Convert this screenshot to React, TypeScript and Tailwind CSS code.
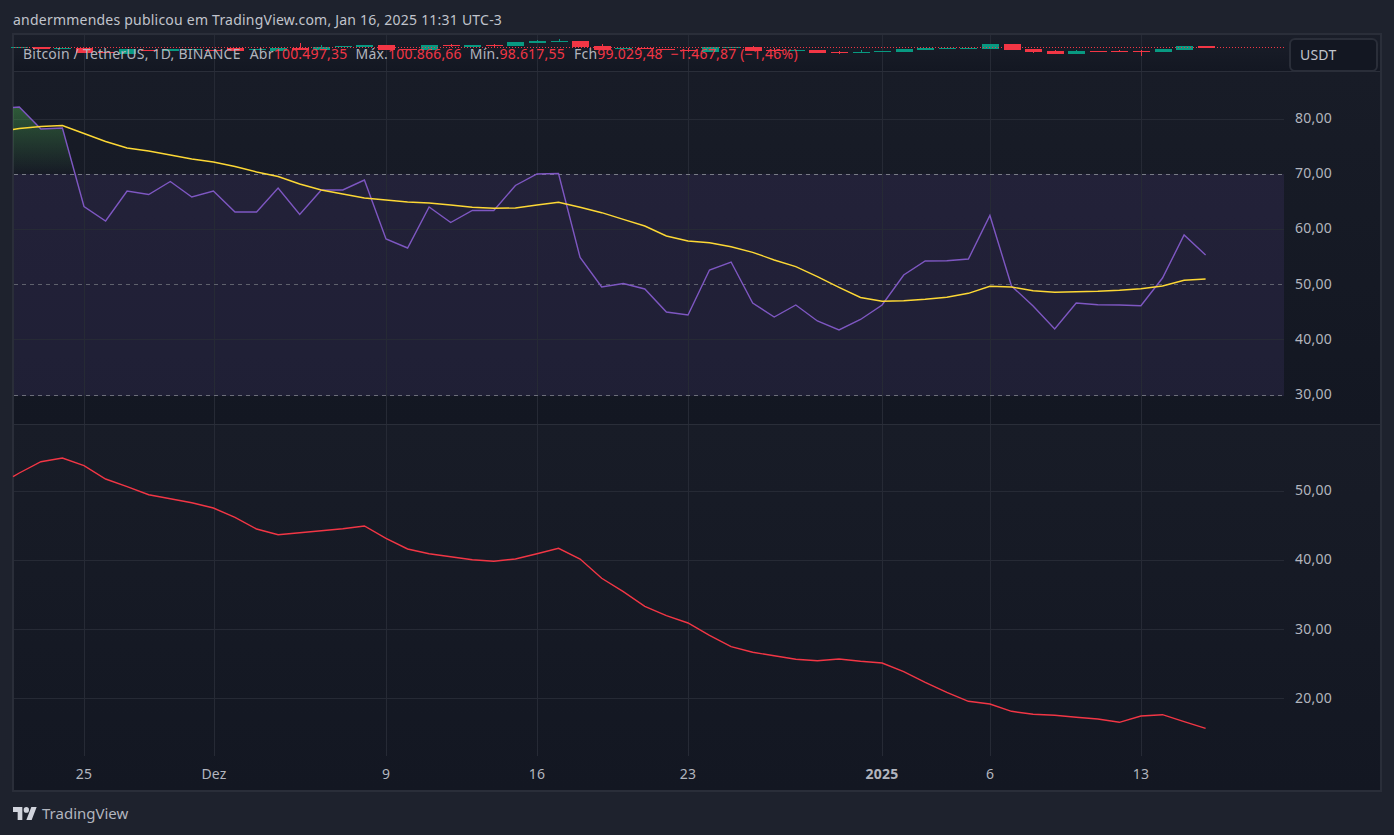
const X = (i: number) => 84 + 21.57 * i;

const rsi = [107, 129, 128, 206.5, 221, 191, 194.5, 181.5, 197, 191, 212, 212, 188, 214.5, 190, 190, 180, 239, 248, 207, 222.5, 210.5, 210.5, 185.5, 174, 173.5, 257.5, 287, 283.5, 289, 312, 315, 270, 262, 303, 317, 305, 321, 330, 319.5, 305, 275, 261, 260.7, 259, 215.5, 286, 306, 329, 303, 304.7, 305, 305.7, 278, 235, 255];
const ma = [128.5, 126.5, 125.5, 133.5, 141.5, 148, 151, 155, 159, 162, 166.5, 172, 176.5, 184, 190, 194, 198, 200, 202, 203, 205, 207.3, 208.3, 208, 205, 202.3, 207.3, 212.7, 219.3, 226, 236, 241, 242.7, 246.7, 252.3, 260, 266.7, 276.7, 287.3, 297.5, 301.3, 300.7, 299.3, 297.3, 293.3, 286.3, 287, 290.7, 292.3, 291.7, 291.3, 290.3, 288.7, 286, 280.3, 279];
const low = [473, 461.7, 458, 465.7, 479, 486.7, 494.7, 498.7, 502.7, 508, 517.3, 529, 534.7, 532.7, 530.7, 528.7, 526, 538.3, 549, 553.7, 556.7, 559.7, 561.3, 559, 553.7, 548.3, 559, 578.3, 591.7, 606.3, 615.7, 623, 635.3, 646.7, 652.3, 655.7, 659.3, 660.7, 659, 661.3, 663, 671.7, 682.3, 692.3, 701.3, 704, 711.3, 714.3, 715.3, 717.3, 719, 722.3, 716, 714.7, 721.7, 728.3];

const pts = (ys: number[], startY: number) =>
  `13,${startY} ` + ys.map((y, k) => `${X(k - 3).toFixed(1)},${y}`).join(" ");

const G = "#089981";
const R = "#f23645";
// i, top, bottom, colour, wick top, wick bottom
const candles: [number, number, number, string, number?, number?][] = [
  [-3, 47, 48, G], [-2, 47, 49, R], [-1, 48, 49, G], [0, 48, 53, R], [1, 52, 53, R], [2, 49, 54, G],
  [3, 50, 51, R], [4, 49, 51, G], [5, 49, 50, G], [6, 50, 51, R], [7, 48, 51, R], [8, 49, 50, G],
  [9, 48, 51, G], [10, 48, 50, R, 43, 50], [11, 47, 50, G, 45, 50], [12, 46, 47, G], [13, 45, 47, G],
  [14, 45, 50, R], [15, 49, 50, R], [16, 45, 50, G], [17, 45, 46, R, 44, 47], [18, 45, 47, G],
  [19, 45, 46, R, 44, 47], [20, 42, 46, G], [21, 41, 43, G, 40, 43], [22, 41, 42, G, 39, 42],
  [23, 41, 47, R], [24, 46, 50, R, 44, 50], [25, 48, 49, G], [26, 48, 49, R], [27, 49, 50, R],
  [28, 50, 51, R, 48, 52], [29, 47, 52, G], [30, 47, 48, G], [31, 47, 51, R, 46, 51],
  [32, 50, 51, R, 48, 52], [33, 50, 51, G], [34, 50, 53, R], [35, 52, 53, R, 51, 54],
  [36, 52, 53, G, 50, 53], [37, 51, 52, G], [38, 49, 52, G], [39, 48, 50, G], [40, 48, 49, G],
  [41, 48, 49, G], [42, 44, 49, G], [43, 44, 50, R], [44, 49, 52, R, 49, 53], [45, 51, 54, R, 50, 54],
  [46, 51, 54, G, 50, 54], [47, 51, 52, R], [48, 51, 52, R, 50, 52], [49, 51, 52, R, 50, 56],
  [50, 49, 52, G], [51, 46, 50, G], [52, 46, 48, R],
];

const vLines = [84.5, 214.5, 386.5, 537.5, 688.5, 882.5, 990.5, 1141.5];
const ticks = [
  { x: 84, t: "25" }, { x: 214, t: "Dez" }, { x: 386, t: "9" }, { x: 537, t: "16" },
  { x: 688, t: "23" }, { x: 882, t: "2025", b: true }, { x: 990, t: "6" }, { x: 1141, t: "13" },
];

const GRID = "#262a35";

function Verticals({ y1, y2 }: { y1: number; y2: number }) {
  return (
    <>
      {vLines.map((x) => (
        <line key={x} x1={x} x2={x} y1={y1} y2={y2} stroke={GRID} />
      ))}
    </>
  );
}

function Price({ v, h }: { v: string; h: string }) {
  return <div className={`flex items-center ${h}`}>{v}</div>;
}

export default function App() {
  return (
    <div
      className="flex h-[835px] w-full flex-col overflow-hidden bg-[#1e222d] text-[14px] tracking-[0.22px] text-[#b2b5be]"
      style={{ fontFamily: '"Noto Sans", sans-serif' }}
    >
      <header className="flex h-[33px] shrink-0 items-center pl-[13px] pt-[5px] text-[#c1c4cc]">
        andermmendes publicou em TradingView.com, Jan 16, 2025 11:31 UTC-3
      </header>

      <main className="mx-3 flex h-[759px] shrink-0 flex-col border-2 border-[#2a2e39]">
        {/* candle pane */}
        <section className="flex h-[37px] shrink-0 border-b border-[#2a2e39] bg-linear-to-b from-[#1a1e29] to-[#131722]">
          <div className="relative w-[1270px] shrink-0">
            <svg width={1270} height={36} viewBox="14 35 1270 36" className="block overflow-visible">
              <Verticals y1={35} y2={71} />
              {candles.map(([i, t, b, c, wt, wb]) => (
                <g key={i} fill={c} shapeRendering="crispEdges">
                  {wt !== undefined && <rect x={Math.round(X(i))} y={wt} width={1} height={(wb as number) - wt} />}
                  <rect x={Math.round(X(i)) - 8} y={t} width={17} height={b - t} />
                </g>
              ))}
              <line x1={14} x2={1284} y1={47.5} y2={47.5} stroke={R} strokeDasharray="1 2" />
            </svg>
            <div className="absolute left-[9px] top-[8px] flex h-5 items-center whitespace-pre">
              <span>Bitcoin / TetherUS, 1D, BINANCE</span>
              <span className="ml-[9px]">Abr</span>
              <span className="text-[#f23645]">100.497,35</span>
              <span className="ml-[8px]">Máx.</span>
              <span className="text-[#f23645]">100.866,66</span>
              <span className="ml-[8px]">Mín.</span>
              <span className="text-[#f23645]">98.617,55</span>
              <span className="ml-[9px]">Fch</span>
              <span className="text-[#f23645]">99.029,48</span>
              <span className="ml-[8px] text-[#f23645]">−1.467,87 (−1,46%)</span>
            </div>
          </div>
          <div className="flex-1 pl-[5px] pr-[2px] pt-[3px]">
            <div className="flex h-[34px] items-center rounded-md border-2 border-[#2a2e39] bg-[#131722] pb-[2px] pl-[9px] text-[#c1c4cc]">
              USDT
            </div>
          </div>
        </section>

        {/* RSI pane */}
        <section className="flex h-[353px] shrink-0 border-b border-[#2a2e39] bg-linear-to-b from-[#181c27] to-[#131722]">
          <svg width={1270} height={352} viewBox="14 72 1270 352" className="block shrink-0 overflow-visible">
            <defs>
              <linearGradient id="ob" x1="0" x2="0" y1="107" y2="174" gradientUnits="userSpaceOnUse">
                <stop offset="0" stopColor="#4caf50" stopOpacity={0.42} />
                <stop offset="1" stopColor="#4caf50" stopOpacity={0} />
              </linearGradient>
            </defs>
            <rect x={14} y={174} width={1270} height={222} fill="#7e57c2" fillOpacity={0.12} />
            <Verticals y1={72} y2={424} />
            {[119.5, 229.5, 339.5].map((y) => (
              <line key={y} x1={14} x2={1284} y1={y} y2={y} stroke={GRID} />
            ))}
            <line x1={14} x2={1284} y1={174.5} y2={174.5} stroke="#787b86" strokeDasharray="4 4" />
            <line x1={14} x2={1284} y1={284.5} y2={284.5} stroke="#5f616d" strokeDasharray="4 4" />
            <line x1={14} x2={1284} y1={395.5} y2={395.5} stroke="#6c6e7a" strokeDasharray="4 4" />
            <polygon points="13,174 13,107.5 19.3,107 40.9,129 62.4,128 75,174" fill="url(#ob)" />
            <polyline points={pts(rsi, 107.5)} fill="none" stroke="#7e57c2" strokeWidth={1.4} />
            <polyline points={pts(ma, 129.5)} fill="none" stroke="#fdd835" strokeWidth={1.4} />
          </svg>
          <div className="flex-1 pl-[11px] pt-[18px]">
            {["80,00", "70,00", "60,00", "50,00", "40,00", "30,00"].map((v) => (
              <Price key={v} v={v} h="h-[55.2px]" />
            ))}
          </div>
        </section>

        {/* lower pane and time axis */}
        <div className="flex min-h-0 flex-1 flex-col bg-linear-to-b from-[#181c27] to-[#131722]">
          <section className="flex h-[331px] shrink-0">
            <svg width={1270} height={331} viewBox="14 425 1270 331" className="block shrink-0 overflow-visible">
              <Verticals y1={425} y2={756} />
              {[491.5, 560.5, 629.5, 698.5].map((y) => (
                <line key={y} x1={14} x2={1284} y1={y} y2={y} stroke={GRID} />
              ))}
              <polyline points={pts(low, 476.7)} fill="none" stroke="#f23645" strokeWidth={1.4} />
            </svg>
            <div className="flex-1 pl-[11px] pt-[30px]">
              {["50,00", "40,00", "30,00", "20,00"].map((v) => (
                <Price key={v} v={v} h="h-[69.3px]" />
              ))}
            </div>
          </section>
          <div className="relative flex-1">
            {ticks.map((k) => (
              <span
                key={k.t}
                className={`absolute top-[8px] -translate-x-1/2 leading-5 ${k.b ? "font-bold" : ""}`}
                style={{ left: k.x - 14 }}
              >
                {k.t}
              </span>
            ))}
          </div>
        </div>
      </main>

      <footer className="flex flex-1 items-center gap-[5px] pl-[13px] pb-[1px] text-[15px] tracking-normal text-[#b2b5be]">
        <svg width={24} height={13} viewBox="0 4 36 18" fill="#d1d4dc" preserveAspectRatio="none">
          <path d="M14 22H7V11H0V4h14v18zM28 22h-8l7.5-18h8L28 22z" />
          <circle cx={20} cy={8} r={4} />
        </svg>
        <span>TradingView</span>
      </footer>
    </div>
  );
}
